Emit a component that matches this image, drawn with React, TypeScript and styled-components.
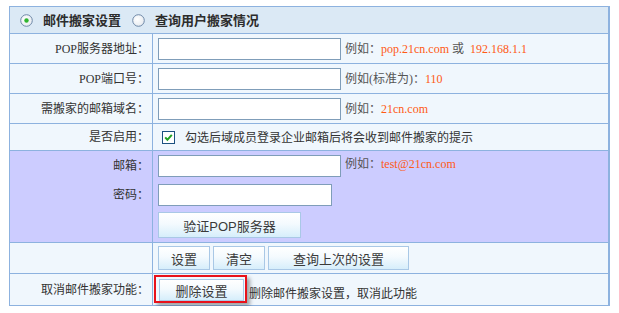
import React from "react";
import styled, { createGlobalStyle } from "styled-components";

const GlobalStyle = createGlobalStyle`
  body {
    margin: 0;
    background: #ffffff;
    font-family: "Liberation Serif", "Noto Sans CJK SC", serif;
    font-size: 12px;
    color: #333;
  }
`;

const LINE = "#8db2df";

const Page = styled.div`
  padding: 6px 0 0 9px;
`;

const Panel = styled.div`
  width: 598px;
  border: 1px solid ${LINE};
  border-right-width: 2px;
`;

const Header = styled.div`
  height: 26px;
  background: #dbe9f5;
  display: flex;
  align-items: center;
  padding-left: 10px;
`;

const Tab = styled.label`
  display: flex;
  align-items: center;
  gap: 10px;
  margin-right: 11px;
  font-family: "Noto Sans CJK SC", sans-serif;
  font-weight: 700;
  font-size: 13px;
  line-height: 16px;
  color: #2c2c2c;
`;

const Section = styled.div<{ $tone?: "blue" | "purple" }>`
  display: grid;
  grid-template-columns: 143px 1fr;
  border-top: 1px solid ${LINE};
  background: ${({ $tone }) => ($tone === "purple" ? "#ccccff" : "#f0f7fd")};
`;

const Label = styled.div<{ $h: number; $top?: boolean }>`
  height: ${({ $h }) => $h}px;
  border-right: 1px solid ${LINE};
  display: flex;
  align-items: ${({ $top }) => ($top ? "flex-start" : "center")};
  justify-content: flex-end;
  padding: ${({ $top }) => ($top ? "5px 3px 0 0" : "0 3px 0 0")};
  box-sizing: border-box;
  line-height: 20px;
  color: #333;
`;

const Field = styled.div<{ $h: number; $top?: boolean; $end?: boolean }>`
  height: ${({ $h }) => $h}px;
  display: flex;
  align-items: ${({ $top, $end }) =>
    $top ? "flex-start" : $end ? "flex-end" : "center"};
  padding: ${({ $top }) => ($top ? "4px 0 0 5px" : "0 0 0 5px")};
  box-sizing: border-box;
  gap: 4px;
`;

const TextInput = styled.input<{ $w?: number }>`
  width: ${({ $w }) => $w ?? 183}px;
  height: 22px;
  box-sizing: border-box;
  border: 1px solid #7f9db9;
  background: #fff;
  margin: 0;
  padding: 0 3px;
`;

const Hint = styled.span`
  color: #555;
  line-height: 18px;
  white-space: nowrap;
`;

const Sample = styled.span`
  color: #ff5a14;
`;

const CheckLine = styled.label`
  display: flex;
  align-items: center;
  gap: 10px;
  margin-left: 4px;
  font-family: "Noto Sans CJK SC", sans-serif;
  color: #333;
  line-height: 18px;
`;

const ButtonRow = styled.div`
  display: flex;
  gap: 3px;
`;

const Button = styled.button<{ $w: number; $h?: number }>`
  width: ${({ $w }) => $w}px;
  height: ${({ $h }) => $h ?? 24}px;
  margin: 0;
  padding: 0;
  border: 1px solid #a9c8e6;
  background: linear-gradient(#ffffff 0%, #f4fafe 45%, #d6eefb 100%);
  font-family: "Liberation Sans", "Noto Sans CJK SC", sans-serif;
  font-size: 13px;
  color: #3a3a3a;
  cursor: pointer;
`;

const Marked = styled.div`
  border: 2px solid #e8111a;
  padding: 2px 1px 0 3px;
  box-shadow: 3px 3px 4px rgba(0, 0, 0, 0.35);
  display: flex;
  margin: 0 0 2px -4px;
`;

const Note = styled.span`
  font-family: "Noto Sans CJK SC", sans-serif;
  color: #333;
  line-height: 16px;
  margin: 0 0 4px -2px;
`;

const Radio = ({ on }: { on?: boolean }) => (
  <svg width="13" height="13" viewBox="0 0 13 13">
    <defs>
      <radialGradient id={on ? "rg1" : "rg2"} cx="0.4" cy="0.4" r="0.7">
        <stop offset="0" stopColor="#ffffff" />
        <stop offset="1" stopColor="#e3e8ee" />
      </radialGradient>
    </defs>
    <circle
      cx="6.5"
      cy="6.5"
      r="5.8"
      fill={`url(#${on ? "rg1" : "rg2"})`}
      stroke="#6f89a8"
      strokeWidth="1"
    />
    {on && <circle cx="6.5" cy="6.5" r="2.2" fill="#2fb52f" />}
  </svg>
);

const Check = () => (
  <svg width="13" height="13" viewBox="0 0 13 13">
    <rect x="0.5" y="0.5" width="12" height="12" fill="#fff" stroke="#1c5180" />
    <path
      d="M3.2 6.4 L5.4 8.8 L9.8 3.8"
      fill="none"
      stroke="#21a121"
      strokeWidth="2"
    />
  </svg>
);

export default function App() {
  return (
    <Page>
      <GlobalStyle />
      <Panel>
        <Header>
          <Tab>
            <Radio on />
            邮件搬家设置
          </Tab>
          <Tab>
            <Radio />
            查询用户搬家情况
          </Tab>
        </Header>

        <Section>
          <Label $h={29}>POP服务器地址：</Label>
          <Field $h={29}>
            <TextInput />
            <Hint>
              例如：<Sample>pop.21cn.com</Sample> 或&nbsp;&nbsp;
              <Sample>192.168.1.1</Sample>
            </Hint>
          </Field>
        </Section>

        <Section>
          <Label $h={29}>POP端口号：</Label>
          <Field $h={29}>
            <TextInput />
            <Hint>
              例如(标准为)：<Sample>110</Sample>
            </Hint>
          </Field>
        </Section>

        <Section>
          <Label $h={29}>需搬家的邮箱域名：</Label>
          <Field $h={29}>
            <TextInput />
            <Hint>
              例如：<Sample>21cn.com</Sample>
            </Hint>
          </Field>
        </Section>

        <Section>
          <Label $h={26}>是否启用：</Label>
          <Field $h={26}>
            <CheckLine>
              <Check />
              勾选后域成员登录企业邮箱后将会收到邮件搬家的提示
            </CheckLine>
          </Field>
        </Section>

        <Section $tone="purple">
          <Label $h={29} $top>
            邮箱：
          </Label>
          <Field $h={29} $top>
            <TextInput />
            <Hint>
              例如：<Sample>test@21cn.com</Sample>
            </Hint>
          </Field>
          <Label $h={28} $top>
            密码：
          </Label>
          <Field $h={28} $top>
            <TextInput type="password" $w={174} />
          </Field>
          <Label $h={34} />
          <Field $h={34} $top>
            <Button $w={143} $h={26}>
              验证POP服务器
            </Button>
          </Field>
        </Section>

        <Section>
          <Label $h={30} />
          <Field $h={30}>
            <ButtonRow>
              <Button $w={52}>设置</Button>
              <Button $w={52}>清空</Button>
              <Button $w={141}>查询上次的设置</Button>
            </ButtonRow>
          </Field>
        </Section>

        <Section>
          <Label $h={31}>取消邮件搬家功能：</Label>
          <Field $h={31} $end>
            <Marked>
              <Button $w={85} $h={22}>
                删除设置
              </Button>
            </Marked>
            <Note>删除邮件搬家设置，取消此功能</Note>
          </Field>
        </Section>
      </Panel>
    </Page>
  );
}
